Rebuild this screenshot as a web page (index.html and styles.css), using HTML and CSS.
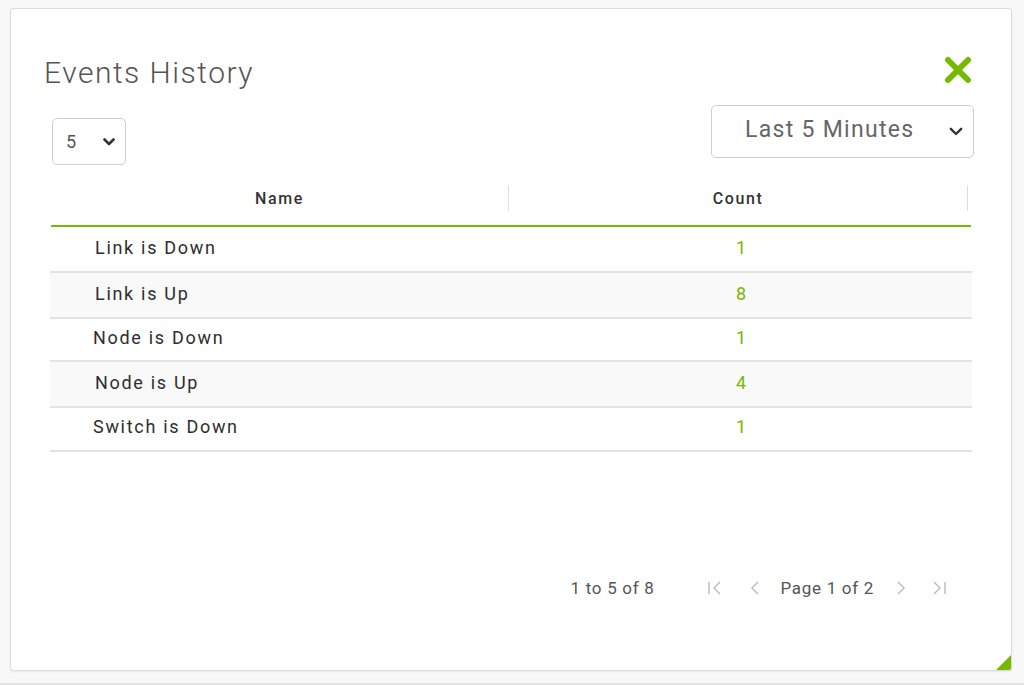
FILE: index.html
```html
<!DOCTYPE html>
<html>
<head>
<meta charset="utf-8">
<link rel="stylesheet" href="styles.css">
</head>
<body>
<div class="card">
  <div class="title-row">
    <h1 class="title">Events History</h1>
    <button class="close" aria-label="Close">
      <svg width="28" height="28" viewBox="0 0 28 28"><path d="M4 4 L24 24 M24 4 L4 24" stroke="#76b900" stroke-width="6" stroke-linecap="round"/></svg>
    </button>
  </div>
  <div class="controls">
    <div class="select select-small">
      <span>5</span>
      <svg class="chev" width="12" height="8" viewBox="0 0 12 8"><path d="M1.5 1.5 L6 6 L10.5 1.5" fill="none" stroke="#333" stroke-width="2.6" stroke-linecap="round" stroke-linejoin="round"/></svg>
    </div>
    <div class="select select-range">
      <span>Last 5 Minutes</span>
      <svg class="chev" width="14" height="9" viewBox="0 0 14 9"><path d="M1.8 1.8 L7 7 L12.2 1.8" fill="none" stroke="#333" stroke-width="2.4" stroke-linecap="round" stroke-linejoin="round"/></svg>
    </div>
  </div>
  <div class="table">
    <div class="thead">
      <div class="th">Name</div>
      <div class="th">Count</div>
    </div>
    <div class="tr"><div class="td name">Link is Down</div><div class="td count">1</div></div>
    <div class="tr alt"><div class="td name">Link is Up</div><div class="td count">8</div></div>
    <div class="tr short"><div class="td name">Node is Down</div><div class="td count">1</div></div>
    <div class="tr alt"><div class="td name">Node is Up</div><div class="td count">4</div></div>
    <div class="tr last"><div class="td name">Switch is Down</div><div class="td count">1</div></div>
  </div>
  <div class="pager">
    <span class="summary">1 to 5 of 8</span>
    <div class="nav">
      <svg width="16" height="16" viewBox="0 0 16 16"><path d="M2 2 V14 M13 2 L7 8 L13 14" fill="none" stroke="#bbb" stroke-width="1.4"/></svg>
      <svg class="prev" width="10" height="16" viewBox="0 0 10 16"><path d="M8 2 L2 8 L8 14" fill="none" stroke="#bbb" stroke-width="1.4"/></svg>
      <span class="page">Page 1 of 2</span>
      <svg class="next" width="10" height="16" viewBox="0 0 10 16"><path d="M2 2 L8 8 L2 14" fill="none" stroke="#bbb" stroke-width="1.4"/></svg>
      <svg width="16" height="16" viewBox="0 0 16 16"><path d="M3 2 L9 8 L3 14 M14 2 V14" fill="none" stroke="#bbb" stroke-width="1.4"/></svg>
    </div>
  </div>
  <div class="resize"></div>
</div>
<div class="bottom-edge"></div>
</body>
</html>
```

FILE: styles.css
```css
html, body {
  margin: 0;
  padding: 0;
}
body {
  background: #f8f8f8;
  width: 1024px;
  height: 685px;
  overflow: hidden;
  font-family: Roboto, "Liberation Sans", sans-serif;
  color: #333;
}
.card {
  position: relative;
  box-sizing: border-box;
  margin: 8px 0 0 10px;
  width: 1002px;
  height: 663px;
  background: #fff;
  border: 1px solid #dcdcdc;
  border-radius: 3px;
  box-shadow: 0 1px 2px rgba(0,0,0,0.06);
  padding: 0 40px 0 40px;
}
.title-row {
  display: flex;
  justify-content: space-between;
  align-items: center;
  margin-top: 43px;
  height: 40px;
}
.title {
  margin: 0 0 0 -7px;
  font-size: 30px;
  font-weight: 300;
  color: #555;
  letter-spacing: 1.5px;
}
.close {
  border: 0;
  background: none;
  padding: 0;
  width: 28px;
  height: 28px;
  margin-right: -1px;
  margin-top: -4px;
}
.close svg { display: block; }
.controls {
  display: flex;
  justify-content: space-between;
  align-items: flex-start;
  margin-top: 13px;
  margin-right: -3px;
}
.select {
  box-sizing: border-box;
  display: flex;
  align-items: center;
  justify-content: space-between;
  border: 1px solid #cfcfcf;
  border-radius: 5px;
  background: #fff;
  color: #555;
}
.select-small {
  margin-top: 13px;
  margin-left: 1px;
  width: 74px;
  height: 47px;
  padding: 0 10px 0 13px;
  font-size: 18px;
}
.select-range {
  width: 263px;
  height: 53px;
  padding: 0 10px 0 33px;
  font-size: 23px;
  color: #666;
  letter-spacing: 1.3px;
}
.select-range span { margin-top: -4px; }
.chev { display: block; }
.table {
  margin-top: 21px;
}
.thead {
  display: grid;
  grid-template-columns: 458px 459px;
  height: 39px;
  border-bottom: 2px solid #76b900;
}
.th {
  display: flex;
  align-items: center;
  justify-content: center;
  font-size: 16px;
  font-weight: 500;
  color: #333;
  letter-spacing: 1.6px;
  border-right: 1px solid #dedede;
  height: 25px;
}
.tr {
  display: grid;
  grid-template-columns: 458px 459px;
  height: 44px;
  border-bottom: 2px solid #e2e2e2;
  margin: 0 -1px 0 -1px;
  padding-left: 1px;
}
.tr.short { height: 41px; }
.tr.last { height: 42px; }
.tr.alt { background: #f9f9f9; }
.td {
  font-size: 18px;
  letter-spacing: 1.7px;
  padding-top: 10px;
}
.td.name {
  padding-left: 44px;
  color: #2e2e2e;
}
.td.count {
  text-align: center;
  color: #76b900;
  padding-left: 7px;
}
.tr.short .td, .tr.last .td { padding-top: 8px; }
.tr.short .td.name, .tr.last .td.name { padding-left: 42px; }
.pager {
  display: flex;
  justify-content: flex-end;
  align-items: center;
  margin-top: 126px;
  margin-right: 24px;
  font-size: 17px;
  color: #555;
  letter-spacing: 0.7px;
}
.summary { margin-right: 53px; }
.nav {
  display: flex;
  align-items: center;
}
.nav svg { display: block; }
.nav .prev { margin-left: 27px; }
.nav .page { margin: 0 22px 0 20px; }
.nav .next { margin-right: 25px; }
.resize {
  position: absolute;
  right: 0;
  bottom: 0;
  width: 0;
  height: 0;
  border-left: 15px solid transparent;
  border-bottom: 15px solid #76b900;
  border-bottom-right-radius: 2px;
}
.bottom-edge {
  margin-top: 12px;
  border-top: 2px solid #e4e4e4;
}
```
